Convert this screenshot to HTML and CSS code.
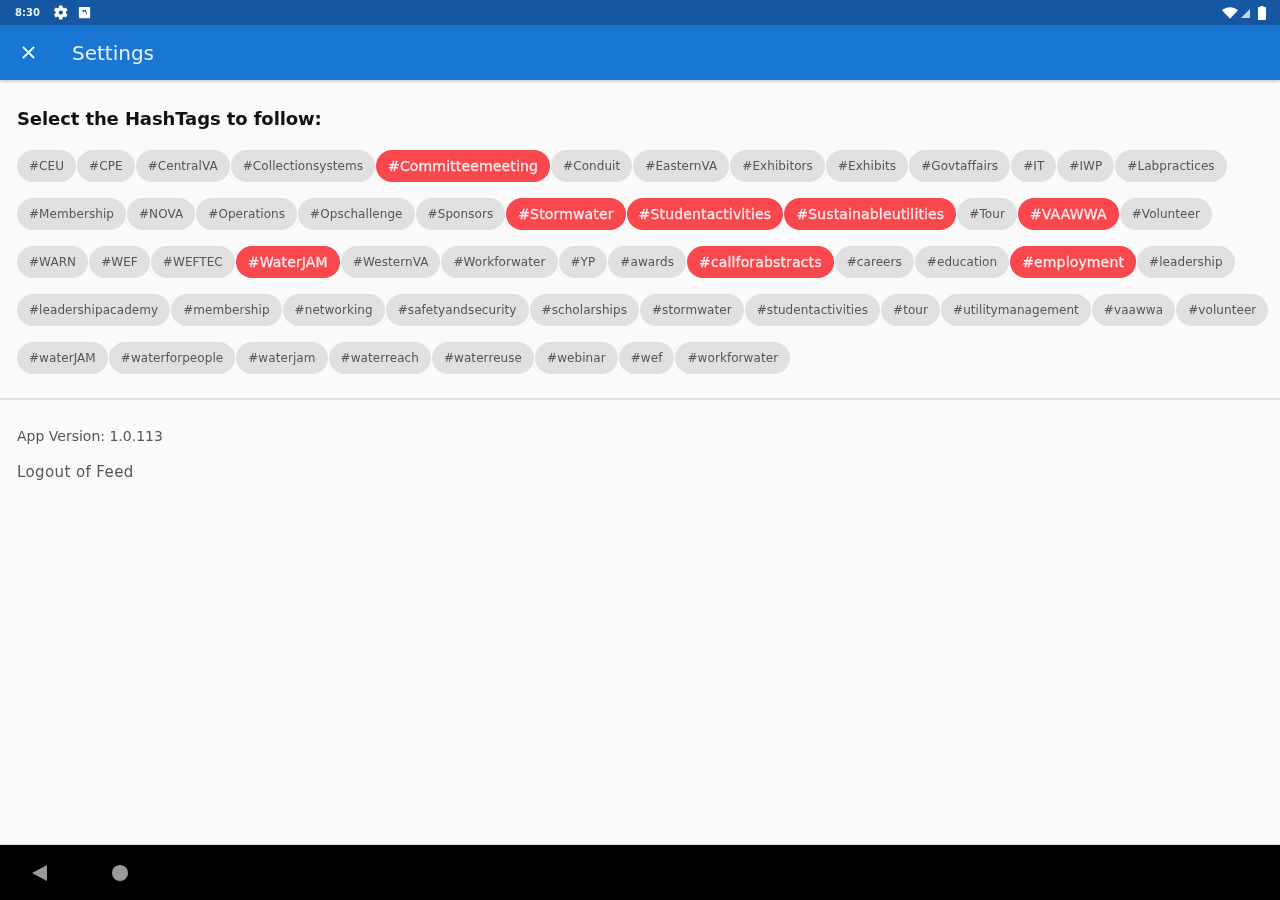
FILE: index.html

```html
<!DOCTYPE html>
<html lang="en">
<head>
  <meta charset="UTF-8" />
  <meta name="viewport" content="width=device-width, initial-scale=1.0"/>
  <title>Settings</title>
  <link rel="stylesheet" href="styles.css">
</head>
<body>
  <div class="status-bar">
    <span class="clock">8:30</span>
    <svg class="gear" viewBox="0 0 24 24"><path fill="#fff" fill-rule="evenodd" d="M19.600 13.200a7.600 7.600 0 0 0 0-2.400l2.400-1.700-2.300-4-2.700 1.200a7.600 7.600 0 0 0-2-1.200L14.700 2h-4.600l-.3 3.100a7.600 7.600 0 0 0-2 1.200L5 5.100l-2.300 4 2.400 1.700a7.600 7.600 0 0 0 0 2.400l-2.400 1.700 2.300 4 2.800-1.200a7.600 7.600 0 0 0 2 1.200l.3 3.100h4.600l.3-3.100a7.600 7.600 0 0 0 2-1.200l2.700 1.200 2.300-4zM12.400 15a3 3 0 1 1 0-6 3 3 0 0 1 0 6z"/></svg>
    <svg class="status-icon" viewBox="0 0 24 24"><path fill="#fff" fill-rule="evenodd" d="M4 3h16a1 1 0 0 1 1 1v16a1 1 0 0 1-1 1H4a1 1 0 0 1-1-1V4a1 1 0 0 1 1-1zm5 5v4h2v-2h2l3 6v-3l-2-5z"/></svg>
    <span class="spacer"></span>
    <svg class="wifi" viewBox="0 0 18 13"><path fill="#fff" d="M0 3.500C5-1 13-1 18 3.500L9 13z"/></svg>
    <svg class="signal" viewBox="0 0 10 10"><path fill="#fff" opacity=".75" d="M10 0v10H0z"/></svg>
    <svg class="battery" viewBox="0 0 8 14"><path fill="#fff" d="M2.500 0h3v1H7a1 1 0 0 1 1 1v11a1 1 0 0 1-1 1H1a1 1 0 0 1-1-1V2a1 1 0 0 1 1-1h1.500z"/></svg>
  </div>

  <header class="app-bar">
    <svg class="close" viewBox="0 0 16 16"><path stroke="#fff" stroke-width="2" d="M2 2l12 12M14 2L2 14"/></svg>
    <h1>Settings</h1>
  </header>

  <main class="content">
    <section class="tags">
      <h2>Select the HashTags to follow:</h2>
      <div class="chips">
        <span class="chip">#CEU</span>
        <span class="chip">#CPE</span>
        <span class="chip">#CentralVA</span>
        <span class="chip">#Collectionsystems</span>
        <span class="chip on">#Committeemeeting</span>
        <span class="chip">#Conduit</span>
        <span class="chip">#EasternVA</span>
        <span class="chip">#Exhibitors</span>
        <span class="chip">#Exhibits</span>
        <span class="chip">#Govtaffairs</span>
        <span class="chip">#IT</span>
        <span class="chip">#IWP</span>
        <span class="chip">#Labpractices</span>
        <span class="chip">#Membership</span>
        <span class="chip">#NOVA</span>
        <span class="chip">#Operations</span>
        <span class="chip">#Opschallenge</span>
        <span class="chip">#Sponsors</span>
        <span class="chip on">#Stormwater</span>
        <span class="chip on">#Studentactivities</span>
        <span class="chip on">#Sustainableutilities</span>
        <span class="chip">#Tour</span>
        <span class="chip on">#VAAWWA</span>
        <span class="chip">#Volunteer</span>
        <span class="chip">#WARN</span>
        <span class="chip">#WEF</span>
        <span class="chip">#WEFTEC</span>
        <span class="chip on">#WaterJAM</span>
        <span class="chip">#WesternVA</span>
        <span class="chip">#Workforwater</span>
        <span class="chip">#YP</span>
        <span class="chip">#awards</span>
        <span class="chip on">#callforabstracts</span>
        <span class="chip">#careers</span>
        <span class="chip">#education</span>
        <span class="chip on">#employment</span>
        <span class="chip">#leadership</span>
        <span class="chip">#leadershipacademy</span>
        <span class="chip">#membership</span>
        <span class="chip">#networking</span>
        <span class="chip">#safetyandsecurity</span>
        <span class="chip">#scholarships</span>
        <span class="chip">#stormwater</span>
        <span class="chip">#studentactivities</span>
        <span class="chip">#tour</span>
        <span class="chip">#utilitymanagement</span>
        <span class="chip">#vaawwa</span>
        <span class="chip">#volunteer</span>
        <span class="chip">#waterJAM</span>
        <span class="chip">#waterforpeople</span>
        <span class="chip">#waterjam</span>
        <span class="chip">#waterreach</span>
        <span class="chip">#waterreuse</span>
        <span class="chip">#webinar</span>
        <span class="chip">#wef</span>
        <span class="chip">#workforwater</span>
      </div>
    </section>
    <section class="about">
      <p>App Version: 1.0.113</p>
      <p class="logout">Logout of Feed</p>
    </section>
  </main>

  <footer class="nav-bar">
    <svg class="nav-back" viewBox="0 0 16 16"><path fill="#9a9a9a" d="M15 0v16L0 8z"/></svg>
    <span class="nav-home"></span>
  </footer>
</body>
</html>
```

FILE: styles.css

```css
body {
  margin: 0;
  display: flex;
  flex-direction: column;
  height: 900px;
  overflow: hidden;
  font-family: 'DejaVu Sans', sans-serif;
  background: #fafafa;
  color: #444;
  filter: blur(.5px);
}
.status-bar {
  height: 25px;
  flex: none;
  background: #1557a0;
  color: #fff;
  display: flex;
  align-items: center;
  padding: 0 14px 0 15px;
  box-sizing: border-box;
}
.clock {
  font-size: 10px;
  font-weight: bold;
  width: 37px;
  opacity: .9;
}
.gear {
  width: 17px;
  height: 17px;
  margin-right: 8px;
}
.status-icon {
  width: 15px;
  height: 15px;
}
.spacer {
  flex: 1;
}
.wifi {
  width: 16px;
  height: 12px;
}
.signal {
  width: 9px;
  height: 9px;
  margin: 2px 8px 0 3px;
}
.battery {
  width: 8px;
  height: 14px;
}
.app-bar {
  height: 55px;
  flex: none;
  background: #1976d2;
  display: flex;
  align-items: center;
  padding-left: 21px;
  box-shadow: 0 1px 3px rgba(0,0,0,.25);
}
.close {
  width: 15px;
  height: 15px;
}
h1 {
  margin: 0 0 0 36px;
  font-size: 20px;
  font-weight: normal;
  color: #e8f1fb;
}
.content {
  flex: 1;
}
.tags {
  padding: 27px 8px 24px 17px;
  border-bottom: 2px solid #e2e2e2;
}
h2 {
  margin: 0 0 19px;
  font-size: 18px;
  letter-spacing: -.1px;
  line-height: 24px;
  font-weight: bold;
  color: #111;
}
.chips {
  display: flex;
  flex-wrap: wrap;
  gap: 16px 1px;
}
.chip {
  height: 32px;
  line-height: 32px;
  padding: 0 12px;
  border-radius: 16px;
  background: #e0e0e0;
  font-size: 12px;
  letter-spacing: .07px;
  color: #555;
  white-space: nowrap;
}
.chip.on {
  background: #f9474e;
  color: #fdeaea;
  font-size: 14px;
  letter-spacing: .15px;
  -webkit-text-stroke: .3px #fdeaea;
}
.about {
  padding: 24px 17px 0;
}
.about p {
  margin: 0 0 12px;
  font-size: 14px;
  line-height: 24px;
  color: #555;
}
.about .logout {
  font-size: 15px;
  letter-spacing: .4px;
}
.nav-bar {
  height: 56px;
  flex: none;
  background: #000;
  border-top: 1px solid #ddd;
  display: flex;
  align-items: center;
  padding-left: 32px;
  box-sizing: border-box;
}
.nav-back {
  width: 16px;
  height: 16px;
}
.nav-home {
  width: 16px;
  height: 16px;
  margin-left: 64px;
  border-radius: 50%;
  background: #9a9a9a;
}
```
